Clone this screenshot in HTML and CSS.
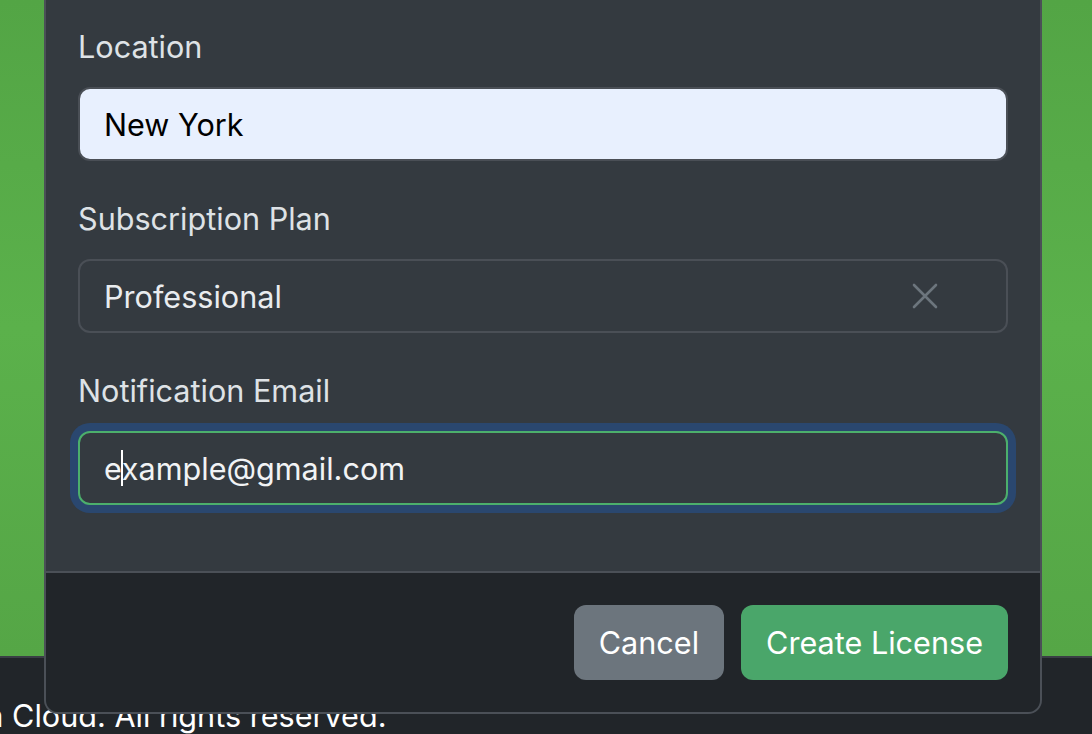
FILE: index.html
```html
<!DOCTYPE html>
<html lang="en">
<head>
<meta charset="utf-8">
<title>Create License</title>
<link rel="stylesheet" href="styles.css">
</head>
<body>
<div class="page">
  <main class="hero"></main>
  <footer class="site-footer">
    <p class="copyright">© 2024 Luma Cloud. All rights reserved.</p>
  </footer>
</div>

<div class="modal">
  <div class="modal-body">
    <div class="form-group">
      <label class="form-label">Location</label>
      <div class="form-control autofilled">New York</div>
    </div>
    <div class="form-group">
      <label class="form-label">Subscription Plan</label>
      <div class="form-control select">
        <span class="select-value">Professional</span>
        <svg class="clear-icon" width="26" height="26" viewBox="0 0 26 26" aria-hidden="true">
          <path d="M2 2 L24 24 M24 2 L2 24" stroke="#6c757d" stroke-width="2.6" stroke-linecap="round" fill="none"/>
        </svg>
      </div>
    </div>
    <div class="form-group">
      <label class="form-label">Notification Email</label>
      <div class="form-control focused">e<span class="caret"></span>xample@gmail.com</div>
    </div>
  </div>
  <div class="modal-footer">
    <button class="btn btn-secondary">Cancel</button>
    <button class="btn btn-success">Create License</button>
  </div>
</div>
</body>
</html>
```
FILE: styles.css
```css
* { box-sizing: border-box; }

html, body {
  margin: 0;
  padding: 0;
  width: 1092px;
  height: 734px;
  overflow: hidden;
  background: #212529;
  font-family: Inter, "Noto Sans", "Liberation Sans", sans-serif;
}

.page {
  display: flex;
  flex-direction: column;
  height: 734px;
}

.hero {
  height: 658px;
  flex: none;
  border-bottom: 2px solid #3a3f45;
  background:
    linear-gradient(58deg, transparent 49.8%, rgba(255,255,255,0.07) 50%, transparent 50.2%),
    linear-gradient(122deg, transparent 49.8%, rgba(255,255,255,0.06) 50%, transparent 50.2%),
    linear-gradient(180deg, #53a545 0%, #5bb14b 50%, #55a646 100%);
}

.site-footer {
  flex: 1;
  background: #212529;
  padding-top: 35px;
  overflow: hidden;
}

.copyright {
  margin: 0 0 0 -197px;
  white-space: nowrap;
  color: #ffffff;
  font-size: 30.6px;
  line-height: 45px;
}

.modal {
  position: absolute;
  left: 44px;
  top: 0;
  width: 998px;
  border: 2px solid #4b5057;
  border-top: none;
  border-radius: 0 0 14px 14px;
  overflow: hidden;
  background: #343a40;
}

.modal-body {
  padding: 23px 32px 32px 31px;
  background: #343a40;
}

.form-group {
  margin-bottom: 34px;
}

.form-label {
  display: block;
  height: 48px;
  margin-bottom: 16px;
  padding-left: 1px;
  color: #dee2e6;
  font-size: 30.6px;
  line-height: 48px;
}

.form-control {
  display: flex;
  align-items: center;
  height: 74px;
  margin-left: 1px;
  padding: 0 24px;
  border: 2px solid #4a4f56;
  border-radius: 12px;
  font-size: 30.6px;
  color: #e9ecef;
  background: #343a40;
  white-space: pre;
}

.autofilled {
  background: #e8f0fe;
  color: #000000;
}

.select-value {
  flex: 1;
}

.clear-icon {
  margin-right: 44px;
}

.focused {
  border-color: #4caf6c;
  box-shadow: 0 0 0 8px rgba(13, 110, 253, 0.25);
  color: #f1f3f5;
}

.caret {
  display: inline-block;
  width: 2px;
  height: 36px;
  margin: 0 -1px;
  background: #ffffff;
}

.modal-footer {
  display: flex;
  justify-content: flex-end;
  gap: 17px;
  padding: 32px;
  border-top: 2px solid #4b5057;
  background: #212529;
}

.btn {
  height: 75px;
  padding: 0 25px;
  border: none;
  border-radius: 12px;
  font-family: inherit;
  font-size: 30.6px;
  color: #ffffff;
}

.btn-secondary { background: #6c757d; }
.btn-success { background: #4aa66a; }
```
